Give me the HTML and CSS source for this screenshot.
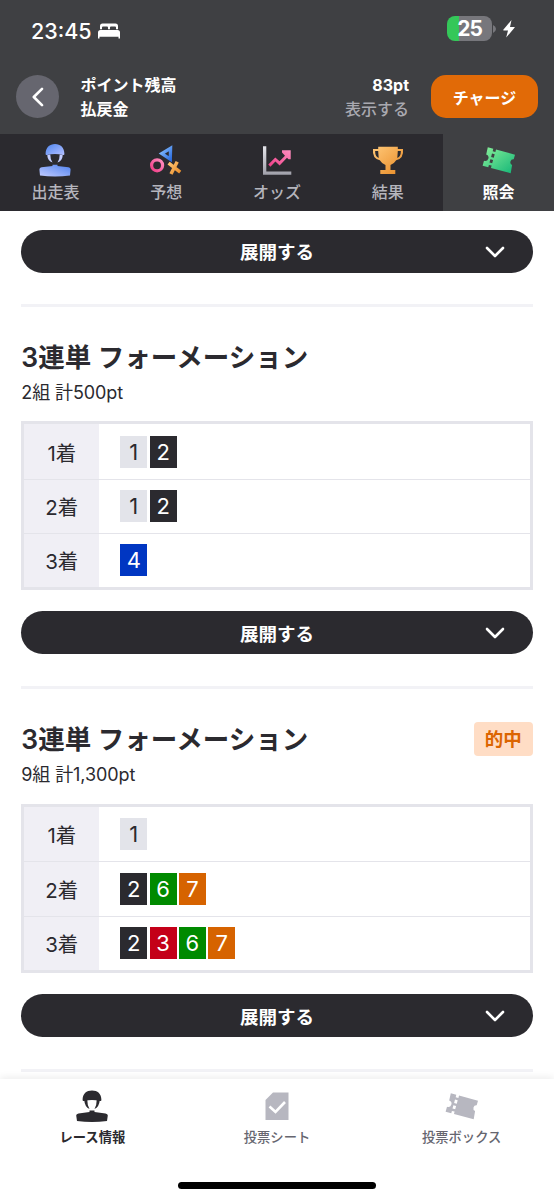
FILE: index.html
```html
<!DOCTYPE html>
<html lang="ja">
<head>
<meta charset="utf-8">
<title>照会</title>
<link rel="stylesheet" href="styles.css">
</head>
<body>
<svg class="defs" aria-hidden="true">
  <defs>
    <linearGradient id="blue" x1="0" y1="0" x2="1" y2="1"><stop offset="0" stop-color="#4f86f0"/><stop offset="1" stop-color="#b3bfff"/></linearGradient>
    <linearGradient id="body" x1="0" y1="1" x2="1" y2="0"><stop offset="0" stop-color="#c3ccff"/><stop offset="1" stop-color="#4f82f0"/></linearGradient>
    <linearGradient id="sky" x1="0" y1="0" x2="1" y2="1"><stop offset="0" stop-color="#83bcff"/><stop offset="1" stop-color="#2f6fe0"/></linearGradient>
    <linearGradient id="pink" x1="0" y1="1" x2="1" y2="0"><stop offset="0" stop-color="#f03c86"/><stop offset="1" stop-color="#ff8fc0"/></linearGradient>
    <linearGradient id="gold" x1="0" y1="0" x2="1" y2="1"><stop offset="0" stop-color="#ffc878"/><stop offset="1" stop-color="#e88a26"/></linearGradient>
    <linearGradient id="green" x1="0" y1="0" x2="1" y2="1"><stop offset="0" stop-color="#8af09a"/><stop offset="1" stop-color="#12b577"/></linearGradient>
    <linearGradient id="steel" x1="0" y1="0" x2="0" y2="1"><stop offset="0" stop-color="#e4e4ea"/><stop offset="1" stop-color="#a0a0aa"/></linearGradient>
    <symbol id="ticket" viewBox="0 0 34 28">
      <path d="M5.800 1.300 11.300 2.800 10.700 5.200 13.400 5.900 14 3.500 33 8.700 31.700 13.300A3 3 0 0 0 30.100 19L28.700 27.300 9 22 9.600 19.600 6.900 18.900 6.300 21.300.6 19.700 2 14.800A3.200 3.200 0 0 0 4.200 8.400ZM10 7.600 9.100 11 11.800 11.700 12.700 8.300ZM8.400 13.200 7.500 16.600 10.200 17.300 11.100 13.900Z" fill-rule="evenodd"/>
    </symbol>
  </defs>
</svg>
<div class="app">
  <header class="header">
    <div class="status">
      <span class="clock">23:45</span>
      <svg class="bed" viewBox="0 0 22 16"><path d="M2 6.300V3Q2 .5 4.500 .5H17.500Q20 .5 20 3V6.300H18V4.500Q18 3.400 17 3.400H13Q12 3.400 12 4.500V6.300H10V4.500Q10 3.400 9 3.400H5Q4 3.400 4 4.500V6.300ZM0 9.500Q0 7 2.500 7H19.500Q22 7 22 9.500V15.500H20.500V13.700H1.500V15.500H0Z" fill="#fff"/></svg>
      <span class="battery">25</span>
      <svg class="cap" viewBox="0 0 3 8"><path d="M0 0Q3 1.500 3 4T0 8Z" fill="#77777c"/></svg>
      <svg class="bolt" viewBox="0 0 12 18"><path d="M8.500 0 .3 9.800Q0 10.400.7 10.400H5L3.200 17.500 11.700 7.600Q12 7 11.300 7H7Z" fill="#fff"/></svg>
    </div>
    <div class="account">
      <button class="back" aria-label="戻る"><svg viewBox="0 0 12 20"><path d="M10 1.800 1.800 10 10 18.200"/></svg></button>
      <div class="labels"><div>ポイント残高</div><div>払戻金</div></div>
      <div class="values"><div>83pt</div><div class="muted">表示する</div></div>
      <button class="charge">チャージ</button>
    </div>
  </header>
  <nav class="tabs">
    <a class="tab"><svg viewBox="0 0 34 34">
      <path d="M7.600 11C7.600 4.500 11.500 1 17 1S26.400 4.500 26.400 11Q26.400 12.300 25 11.900 17 9.900 9 11.900 7.600 12.300 7.600 11Z" fill="url(#blue)"/>
      <path d="M9.200 12.200 12.300 11.400Q12.200 16 14.500 19.600 9.800 18 9.200 12.200ZM24.800 12.200 21.700 11.400Q21.800 16 19.500 19.600 24.200 18 24.800 12.200Z" fill="#c3cdff"/>
      <path d="M14.500 21.800H19.500V23L30.500 24.300Q32.600 24.700 32.600 26.500L32 32.500Q17 34.500 2 32.500L1.400 26.500Q1.400 24.700 3.500 24.300L14.500 23Z" fill="url(#body)"/></svg><span>出走表</span></a>
    <a class="tab"><svg viewBox="0 0 34 34">
      <path d="M21.600 5.300 21.300 16.200 12.800 10.500Z" fill="none" stroke="url(#sky)" stroke-width="3.300"/>
      <circle cx="8.100" cy="22.300" r="5.500" fill="none" stroke="url(#pink)" stroke-width="3.200"/>
      <path d="M19.600 20.200 31.200 29.200M28.200 18.800 22 31" fill="none" stroke="url(#gold)" stroke-width="3.500"/></svg><span>予想</span></a>
    <a class="tab"><svg viewBox="0 0 34 34">
      <path d="M3 3.300H6.300V28.400H31.300V31.700H3Z" fill="url(#steel)"/>
      <path d="M8.300 21.600 15.300 14.500 19.500 18.300 25 12.700 22 9.600V7.300H30.700V16.200H28.500L27 14.700 19.600 22.400 15.400 18.600 10.400 23.700Z" fill="url(#pink)"/></svg><span>オッズ</span></a>
    <a class="tab"><svg viewBox="0 0 34 34">
      <path d="M7.200 3.700H26.800V6H32Q33 15.500 25.200 17.300 23 21 19.500 22V27H24.300V31H9.300V27H14.500V22Q11 21 8.800 17.300 1 15.500 2 6H7.200ZM7.200 8H4.100Q4.100 13.500 7.700 15ZM26.800 8 26.300 15Q29.900 13.500 29.900 8Z" fill-rule="evenodd" fill="url(#gold)"/></svg><span>結果</span></a>
    <a class="tab tab-active"><svg viewBox="0 0 34 34"><use href="#ticket" y="3" width="34" height="28" fill="url(#green)"/></svg><span>照会</span></a>
  </nav>
  <main class="content">
    <button class="expand">展開する<svg viewBox="0 0 20 12"><path d="M2 2 10 10 18 2"/></svg></button>
    <section class="bet">
      <div class="bet-head"><h2>3連単 フォーメーション</h2></div>
      <p class="summary">2組 計500pt</p>
      <div class="grid">
        <div class="row"><div class="rank">1着</div><div class="chips"><span class="chip c1">1</span><span class="chip c2">2</span></div></div>
        <div class="row"><div class="rank">2着</div><div class="chips"><span class="chip c1">1</span><span class="chip c2">2</span></div></div>
        <div class="row"><div class="rank">3着</div><div class="chips"><span class="chip c4">4</span></div></div>
      </div>
      <button class="expand">展開する<svg viewBox="0 0 20 12"><path d="M2 2 10 10 18 2"/></svg></button>
    </section>
    <section class="bet">
      <div class="bet-head"><h2>3連単 フォーメーション</h2><span class="hit">的中</span></div>
      <p class="summary">9組 計1,300pt</p>
      <div class="grid">
        <div class="row"><div class="rank">1着</div><div class="chips"><span class="chip c1">1</span></div></div>
        <div class="row"><div class="rank">2着</div><div class="chips"><span class="chip c2">2</span><span class="chip c6">6</span><span class="chip c7">7</span></div></div>
        <div class="row"><div class="rank">3着</div><div class="chips"><span class="chip c2">2</span><span class="chip c3">3</span><span class="chip c6">6</span><span class="chip c7">7</span></div></div>
      </div>
      <button class="expand">展開する<svg viewBox="0 0 20 12"><path d="M2 2 10 10 18 2"/></svg></button>
    </section>
    <section class="bet"></section>
  </main>
  <footer class="dock">
    <nav class="dock-items">
      <a class="dock-item dock-active"><svg viewBox="0 0 34 34">
        <path d="M7.600 11C7.600 4.500 11.500 1.500 17 1.500S26.400 4.500 26.400 11Q26.400 12.300 25 11.900 17 9.900 9 11.900 7.600 12.300 7.600 11Z"/>
        <path d="M9.200 11 12.300 10.900Q12.200 16 14.500 20 9.800 18 9.200 11ZM24.800 11 21.700 10.900Q21.800 16 19.500 20 24.200 18 24.800 11Z"/>
        <path d="M14.500 21.500H19.500V23L30.500 24.500Q32.800 25 32.800 26.500L32 32Q17 34 2 32L1.200 26.500Q1.200 25 3.500 24.500L14.500 23Z"/></svg><span>レース情報</span></a>
      <a class="dock-item"><svg viewBox="0 0 34 34"><path d="M13 3.500H28.500V31H5.500V11Z"/><path class="check" d="M9.500 17.500 15.500 23 25 13"/></svg><span>投票シート</span></a>
      <a class="dock-item"><svg viewBox="0 0 34 34"><use href="#ticket" y="3" width="34" height="28"/></svg><span>投票ボックス</span></a>
    </nav>
    <div class="home"></div>
  </footer>
</div>
</body>
</html>
```

FILE: styles.css
```css
* { box-sizing: border-box; margin: 0; padding: 0; }
body { background: #fff; color: #2b2a2f; font-family: Inter, "Noto Sans CJK JP", sans-serif; }
button { border: 0; font-family: inherit; }
svg { display: block; flex: none; }
.defs { position: absolute; width: 0; height: 0; }
.app { display: flex; flex-direction: column; height: 1200px; overflow: hidden; }

.header { flex: none; height: 134px; background: #3f4043; color: #fff; }
.status { display: flex; align-items: center; height: 60px; padding: 0 39px 3px 31px; }
.clock { font-size: 21.5px; font-weight: 500; line-height: 28px; width: 67px; padding-top: 4px; }
.bed { width: 22px; height: 16px; margin-top: 4px; }
.battery { margin-left: auto; width: 45px; height: 25px; border-radius: 8px; background: linear-gradient(90deg, #34c759 0 12px, #77777c 12px); font-size: 21px; font-weight: 700; line-height: 25px; text-align: center; letter-spacing: -1px; }
.cap { width: 3px; height: 8px; margin: 0 7px 0 1px; }
.bolt { width: 12px; height: 18px; }
.account { display: flex; align-items: center; height: 73px; padding: 0 16px; }
.back { width: 43px; height: 43px; border-radius: 50%; background: #66666f; display: flex; align-items: center; justify-content: center; }
.back svg { width: 12px; height: 20px; }
.back path, .expand path { fill: none; stroke: #fff; stroke-width: 2.6; stroke-linecap: round; stroke-linejoin: round; }
.labels { margin-left: 21.5px; font-size: 16px; font-weight: 600; line-height: 24px; }
.values { margin-left: auto; text-align: right; font-size: 16px; font-weight: 700; line-height: 24px; }
.values .muted { color: #a9a9b0; font-weight: 500; }
.charge { width: 107px; height: 43px; margin-left: 22px; border-radius: 15px; background: #e16a07; color: #fff; font-size: 16px; font-weight: 700; }

.tabs { flex: none; display: grid; grid-template-columns: repeat(5, 1fr); height: 77px; background: #2b2a2f; }
.tab { display: flex; flex-direction: column; align-items: center; padding-top: 9px; color: #b5b5bd; font-size: 16px; font-weight: 500; line-height: 24px; }
.tab svg { width: 34px; height: 34px; margin-bottom: 3px; }
.tab-active { background: #3f4043; color: #fff; font-weight: 700; }

.content { flex: 1; min-height: 0; overflow: hidden; padding: 18.5px 21.3px 0; }
.expand { position: relative; display: flex; align-items: center; justify-content: center; width: 100%; height: 43px; border-radius: 22px; background: #2b2a2f; color: #fff; font-size: 18.5px; font-weight: 600; }
.expand svg { position: absolute; right: 28px; top: 16px; width: 20px; height: 12px; }
.bet { border-top: 3px solid #f2f2f6; margin-top: 32px; padding-top: 32px; }
.expand + .bet { margin-top: 31.2px; }
.bet-head { display: flex; align-items: center; justify-content: space-between; height: 36px; }
.bet-head h2 { font-size: 26.5px; font-weight: 600; line-height: 36px; white-space: nowrap; }
.hit { width: 59px; height: 34px; border-radius: 4px; background: #ffddc5; color: #dc6500; font-size: 18.5px; font-weight: 600; line-height: 34px; text-align: center; }
.summary { font-size: 18px; line-height: 28px; height: 28px; margin: 4px 0 14.75px; letter-spacing: -0.1px; }
.grid { border: 3px solid #e4e4ea; height: 168.5px; display: grid; grid-template-rows: repeat(3, 1fr); margin-bottom: 21.5px; }
.row { display: flex; }
.row + .row { border-top: 1px solid #e4e4ea; }
.rank { width: 75px; background: #f0eff5; display: flex; align-items: center; justify-content: center; font-size: 20.5px; }
.chips { display: flex; align-items: center; gap: 2.3px; padding-left: 21px; }
.chip { width: 27px; height: 32px; line-height: 32px; text-align: center; font-size: 22px; color: #fff; }
.c1 { background: #e3e4ea; color: #2b2a2f; }
.c2 { background: #2b2a2f; }
.c3 { background: #c40018; }
.c4 { background: #0036c2; }
.c6 { background: #008a00; }
.c7 { background: #d66300; }

.dock { position: relative; flex: none; height: 121px; background: #fff; box-shadow: 0 -2px 7px rgba(0, 0, 0, .07); display: flex; flex-direction: column; justify-content: space-between; align-items: center; padding: 10px 0 11px; }
.dock-items { display: grid; grid-template-columns: repeat(3, 1fr); width: 100%; }
.dock-item { display: flex; flex-direction: column; align-items: center; color: #66666f; font-size: 13.3px; font-weight: 500; line-height: 20px; }
.dock-item svg { width: 34px; height: 34px; margin-bottom: 4px; fill: #b7b7c0; }
.dock-active { color: #2b2a2f; font-weight: 600; }
.dock-active svg { fill: #2b2a2f; }
.dock-item .check { fill: none; stroke: #fff; stroke-width: 2.6; }
.home { width: 198px; height: 7px; border-radius: 4px; background: #000; }
```
